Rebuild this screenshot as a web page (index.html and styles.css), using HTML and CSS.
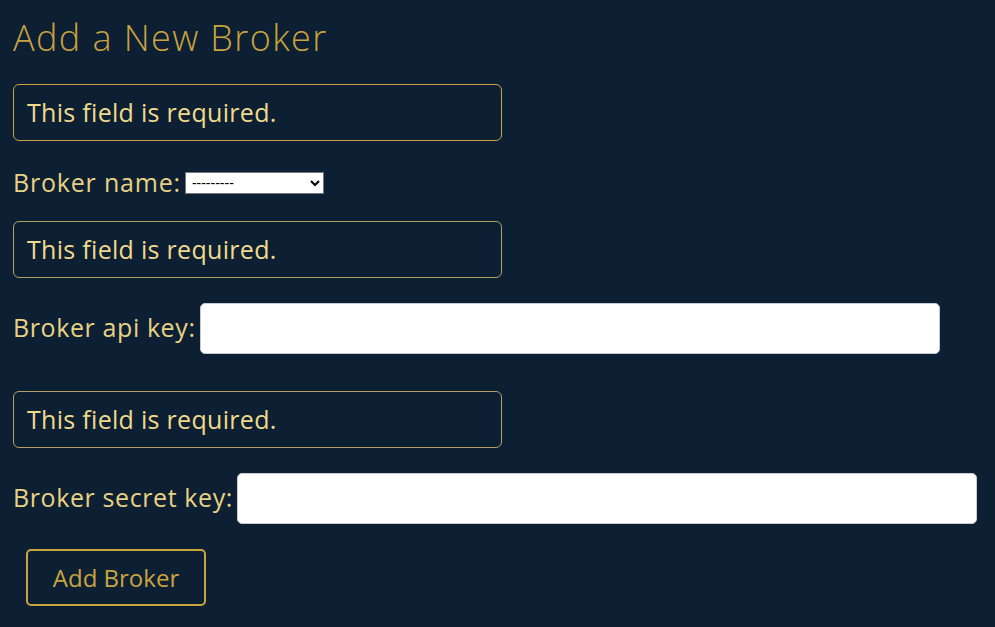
FILE: index.html
```html
<!DOCTYPE html>
<html>
<head>
<meta charset="utf-8">
<link rel="stylesheet" href="styles.css">
</head>
<body>
<div class="page">
  <h1 class="title">Add a New Broker</h1>
  <form class="form">
    <div class="error error-first">This field is required.</div>
    <div class="row row-name">
      <label class="label" for="name">Broker name:</label>
      <select class="select" id="name"><option>---------</option></select>
    </div>
    <div class="error error-second">This field is required.</div>
    <div class="row row-api">
      <label class="label" for="api">Broker api key:</label>
      <input class="input" id="api" type="text">
    </div>
    <div class="error error-third">This field is required.</div>
    <div class="row row-secret">
      <label class="label" for="secret">Broker secret key:</label>
      <input class="input" id="secret" type="text">
    </div>
    <button class="btn" type="button">Add Broker</button>
  </form>
</div>
</body>
</html>
```
FILE: styles.css
```css
html, body {
  margin: 0;
  padding: 0;
  background: #0d1f33;
}
body {
  font-family: "Open Sans", "Liberation Sans", sans-serif;
  width: 995px;
  height: 627px;
  overflow: hidden;
}
.page {
  padding: 0 13px;
}
.title {
  margin: 17px 0 25px;
  font-size: 36px;
  line-height: 42px;
  font-weight: 300;
  letter-spacing: 1.4px;
  color: #c9a43f;
}
.form {
  display: flex;
  flex-direction: column;
  align-items: flex-start;
}
.error {
  box-sizing: border-box;
  width: 489px;
  height: 57px;
  border: 1px solid #b3a06a;
  border-radius: 6px;
  padding: 0 0 2px 13px;
  display: flex;
  align-items: center;
  font-size: 25px;
  letter-spacing: 0.3px;
  color: #f0da8c;
}
.error-first {
  border-color: #c9a43f;
}
.row {
  display: flex;
  align-items: center;
  gap: 4px;
}
.label {
  font-size: 25px;
  letter-spacing: 0.6px;
  padding-bottom: 3px;
  color: #e8d283;
}
.row-name {
  height: 34px;
  margin: 25px 0 21px;
}
.row-name .label {
  letter-spacing: 0.8px;
}
.row-api {
  margin: 25px 0 37px;
}
.row-secret {
  margin: 25px 0 25px;
}
.select {
  width: 139px;
  height: 22px;
  font-family: "Liberation Sans", sans-serif;
  font-size: 14px;
  background: #fff;
  color: #000;
  border: 1px solid #767676;
  border-radius: 0;
  padding: 0 2px;
}
.input {
  box-sizing: border-box;
  width: 740px;
  height: 51px;
  border: 1px solid #c8ccd2;
  border-radius: 5px;
  background: #fff;
  margin: 0;
}
.btn {
  box-sizing: border-box;
  margin-left: 13px;
  width: 180px;
  height: 57px;
  background: transparent;
  border: 2px solid #c9a43f;
  border-radius: 5px;
  color: #c9a43f;
  font-family: "Open Sans", "Liberation Sans", sans-serif;
  font-size: 24px;
  font-weight: 400;
}
```
